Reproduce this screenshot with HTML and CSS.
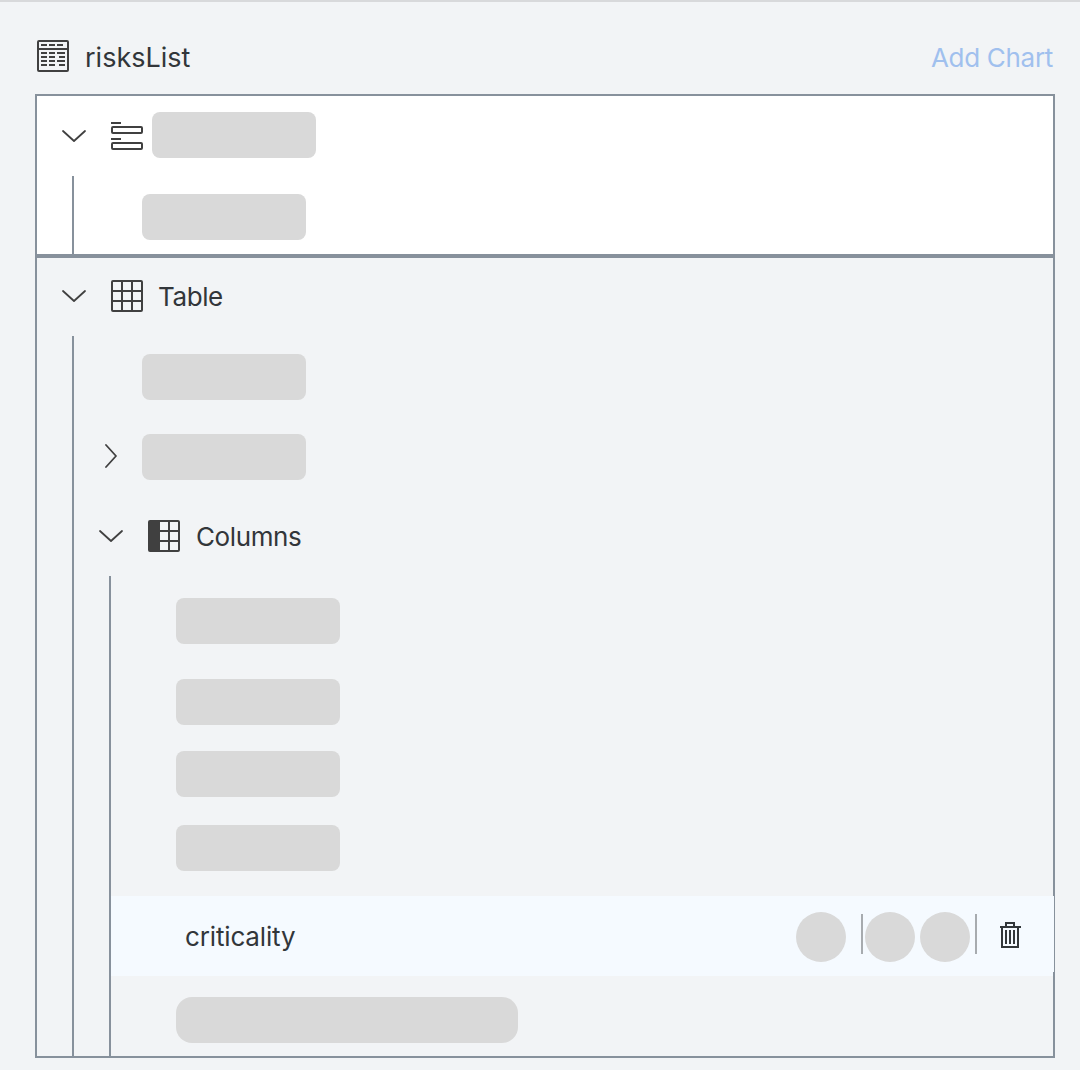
FILE: index.html
```
<!DOCTYPE html>
<html lang="en">
<head>
<meta charset="utf-8">
<title>risksList</title>
<link rel="stylesheet" href="styles.css">
</head>
<body>
<header class="header">
  <svg class="icon" viewBox="0 0 32 32"><rect x="1" y="1" width="30" height="30" rx="1"/><path d="M1 9H31M4 5h6M12 5h6M20 5h6M4 13h6M12 13h6M20 13h8M4 17h6M12 17h6M22 17h6M4 21h6M12 21h6M20 21h8M4 25h6M12 25h6M22 25h6"/></svg>
  <h1 class="title">risksList</h1>
  <a class="add">Add Chart</a>
</header>
<main class="tree">
  <section class="section section-light">
    <div class="row">
      <svg class="chevron" viewBox="0 0 24 24"><path d="M1 7L12 17L23 7"/></svg>
      <svg class="icon" viewBox="0 0 32 32"><path d="M0 3h10M0 19h10"/><rect x="1" y="7" width="30" height="6" rx="1"/><rect x="1" y="23" width="30" height="6" rx="1"/></svg>
      <span class="skeleton skeleton-title"></span>
    </div>
    <div class="children">
      <div class="row row-leaf"><span class="skeleton"></span></div>
    </div>
  </section>
  <section class="section section-table">
    <div class="row">
      <svg class="chevron" viewBox="0 0 24 24"><path d="M1 7L12 17L23 7"/></svg>
      <svg class="icon" viewBox="0 0 32 32"><rect x="1" y="1" width="30" height="30" rx="1"/><path d="M11 1V31M21 1V31M1 11H31M1 21H31"/></svg>
      <span class="label label-table">Table</span>
    </div>
    <div class="children">
      <div class="row row-leaf"><span class="skeleton"></span></div>
      <div class="row row-collapsed">
        <svg class="chevron" viewBox="0 0 24 24"><path d="M7 1L17 12L7 23"/></svg>
        <span class="skeleton"></span>
      </div>
      <div class="row">
        <svg class="chevron" viewBox="0 0 24 24"><path d="M1 7L12 17L23 7"/></svg>
        <svg class="icon" viewBox="0 0 32 32"><rect x="1" y="1" width="30" height="30" rx="1"/><path class="solid" d="M1 1H12V31H1z"/><path d="M21 1V31M12 11H31M12 21H31"/></svg>
        <span class="label label-columns">Columns</span>
      </div>
      <div class="children columns">
        <div class="placeholders">
          <span class="skeleton"></span>
          <span class="skeleton"></span>
          <span class="skeleton"></span>
          <span class="skeleton"></span>
        </div>
        <div class="selected">
          <span class="label label-criticality">criticality</span>
          <div class="actions">
            <span class="dot"></span>
            <span class="divider"></span>
            <span class="dot dot-grouped"></span>
            <span class="dot dot-last"></span>
            <span class="divider divider-last"></span>
            <svg class="trash" viewBox="0 0 21 26"><path d="M0 5H21M6 5V1H14V5M2 5V25H18V5M6 8V22M10 8V22M14 8V22"/></svg>
          </div>
        </div>
        <span class="skeleton skeleton-wide"></span>
      </div>
    </div>
  </section>
</main>
</body>
</html>
```
FILE: styles.css
```
* {
  box-sizing: border-box;
}

body {
  margin: 0;
  height: 1070px;
  border-top: 2px solid #d8d9db;
  background: #f2f4f6;
  color: #32363a;
  font-family: Inter, "Liberation Sans", sans-serif;
  font-size: 26px;
  line-height: 32px;
}

.header {
  display: flex;
  align-items: center;
  height: 92px;
  padding: 16px 27px 0 37px;
}

.title {
  margin: 3px 0 0 16px;
  font-size: 27px;
  font-weight: 400;
}

.add {
  margin: 4px 0 0 auto;
  color: #a0c0ee;
  letter-spacing: -0.3px;
}

.icon,
.chevron,
.trash {
  flex: none;
  fill: none;
  stroke: #404040;
  stroke-width: 2;
}

.icon {
  width: 32px;
  height: 32px;
}

.icon .solid {
  fill: #404040;
  stroke: none;
}

.chevron {
  width: 24px;
  height: 24px;
  stroke-width: 1.8;
  stroke-linecap: round;
  stroke-linejoin: round;
}

.tree {
  width: 1020px;
  margin-left: 35px;
}

.section {
  border: 2px solid #87919c;
}

.section-light {
  height: 162px;
  background: #fff;
}

.section-table {
  height: 802px;
}

.row {
  display: flex;
  align-items: center;
  height: 80px;
  padding-left: 25px;
}

.section-table > .row {
  height: 78px;
  padding-bottom: 2px;
}

.row .icon {
  margin-left: 25px;
}

.label {
  margin: 2px 0 0 16px;
}

.label-table {
  margin-left: 15px;
  letter-spacing: -0.4px;
}

.label-columns {
  letter-spacing: -0.4px;
}

.label-criticality {
  letter-spacing: -0.15px;
}

.children {
  margin-left: 35px;
  border-left: 2px solid #87919c;
}

.section-light .children {
  height: 78px;
}

.section-table > .children {
  height: 720px;
}

.row-leaf {
  padding: 2px 0 0 68px;
}

.row-collapsed .skeleton {
  margin: 2px 0 0 19px;
}

.skeleton {
  flex: none;
  display: block;
  width: 164px;
  height: 46px;
  border-radius: 8px;
  background: #d9d9d9;
}

.skeleton-title {
  margin: -2px 0 0 9px;
}

.columns {
  height: 480px;
}

.placeholders {
  display: grid;
  grid-template-rows: 81px 72px 74px 71px;
  height: 320px;
  padding: 22px 0 0 65px;
}

.selected {
  position: relative;
  display: flex;
  align-items: center;
  justify-content: space-between;
  height: 80px;
  padding-left: 58px;
  background: #f5faff;
}

.selected::after {
  content: "";
  position: absolute;
  top: 0;
  right: -1px;
  width: 1px;
  height: 76px;
  background: #f5faff;
}

.actions {
  display: flex;
  align-items: center;
  padding-right: 32px;
}

.dot {
  width: 50px;
  height: 50px;
  margin-top: 2px;
  border-radius: 50%;
  background: #d9d9d9;
}

.dot-grouped {
  margin-left: 2px;
}

.dot-last {
  margin-left: 5px;
}

.divider {
  width: 2px;
  height: 40px;
  margin: -4px 0 0 15px;
  background: #a7abaf;
}

.divider-last {
  margin-left: 5px;
}

.trash {
  width: 21px;
  height: 26px;
  margin: -2px 0 0 23px;
  stroke: #32363a;
}

.skeleton-wide {
  width: 342px;
  margin: 21px 0 0 65px;
  border-radius: 16px;
}
```
